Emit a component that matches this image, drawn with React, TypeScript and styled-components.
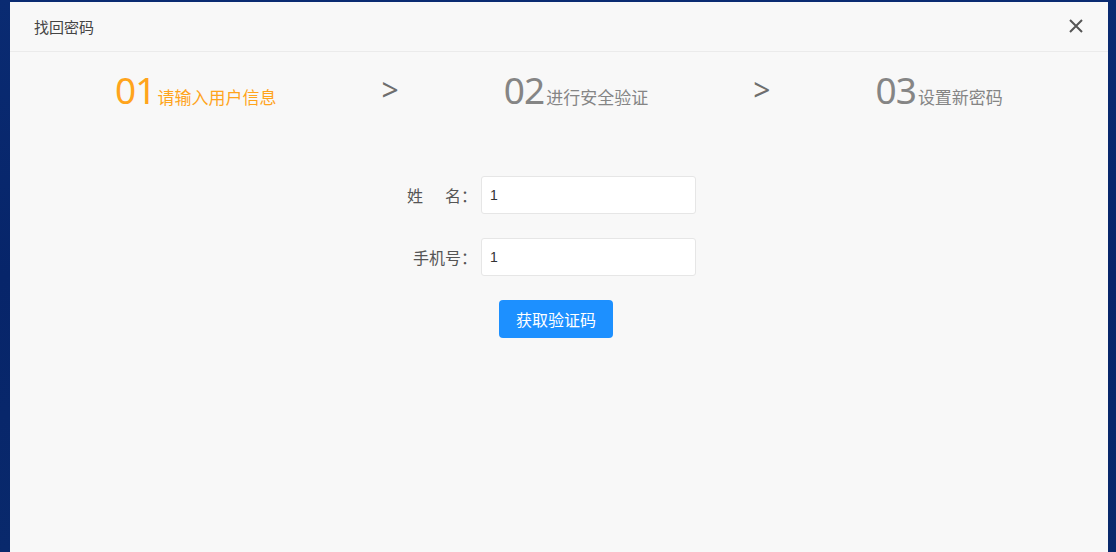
import { Fragment } from "react";
import styled, { createGlobalStyle } from "styled-components";

const GlobalStyle = createGlobalStyle`
  html, body {
    margin: 0;
    padding: 0;
    background: #0a2a6c;
    font-family: "Noto Sans", "Noto Sans CJK SC", sans-serif;
  }
  #root {
    height: 552px;
    overflow: hidden;
  }
`;

const Backdrop = styled.div`
  height: 552px;
  padding: 2px 8px 0 10px;
  box-sizing: border-box;
  background: linear-gradient(180deg, #0a2b72 0%, #07256a 50%, #09296c 100%);
`;

const Dialog = styled.div`
  height: 100%;
  background: #f8f8f8;
  display: flex;
  flex-direction: column;
`;

const Header = styled.div`
  height: 50px;
  display: flex;
  align-items: center;
  justify-content: space-between;
  padding: 0 22px 1px 24px;
  box-sizing: border-box;
  border-bottom: 1px solid #ebebeb;
`;

const Title = styled.span`
  font-size: 15px;
  color: #444;
  font-family: "Noto Sans CJK SC", sans-serif;
`;

const Close = styled.button`
  border: none;
  background: none;
  padding: 0;
  width: 20px;
  height: 20px;
  display: flex;
  align-items: center;
  justify-content: center;
  cursor: pointer;
`;

const Steps = styled.div`
  display: flex;
  justify-content: space-evenly;
  align-items: center;
  height: 76px;
`;

const Step = styled.div<{ $active?: boolean }>`
  display: flex;
  align-items: baseline;
  color: ${(p) => (p.$active ? "#ffa41c" : "#858585")};
`;

const StepNum = styled.span`
  font-family: "Noto Sans", sans-serif;
  font-size: 37px;
  font-weight: 400;
  letter-spacing: -1px;
  line-height: 1;
`;

const StepText = styled.span`
  font-family: "Noto Sans CJK SC", sans-serif;
  font-size: 17px;
  margin-left: 2px;
`;

const Arrow = styled.span`
  font-family: "Noto Sans", sans-serif;
  font-size: 30px;
  font-weight: 400;
  color: #6e6e6e;
  line-height: 1;
`;

const Form = styled.div`
  display: flex;
  flex-direction: column;
  align-items: center;
  margin-top: 48px;
  padding-right: 17px;
  gap: 24px;
`;

const Row = styled.div`
  display: flex;
  align-items: center;
`;

const Label = styled.label`
  width: 72px;
  text-align: right;
  font-family: "Noto Sans CJK SC", sans-serif;
  font-size: 16px;
  color: #555;
  margin-right: 4px;
`;

const Gap = styled.span`
  display: inline-block;
  width: 22px;
`;

const Input = styled.input`
  width: 215px;
  height: 38px;
  box-sizing: border-box;
  border: 1px solid #e6e6e6;
  border-radius: 3px;
  background: #fff;
  padding: 0 8px;
  font-family: "Liberation Sans", sans-serif;
  font-size: 14px;
  color: #333;
  outline: none;
`;

const Button = styled.button`
  margin-left: 11px;
  width: 114px;
  height: 38px;
  border: none;
  border-radius: 4px;
  background: #1d90ff;
  color: #fff;
  font-family: "Noto Sans CJK SC", sans-serif;
  font-size: 16px;
  cursor: pointer;
`;

const steps = [
  { num: "01", text: "请输入用户信息", active: true },
  { num: "02", text: "进行安全验证" },
  { num: "03", text: "设置新密码" },
];

export default function App() {
  return (
    <>
      <GlobalStyle />
      <Backdrop>
        <Dialog>
          <Header>
            <Title>找回密码</Title>
            <Close aria-label="close">
              <svg width="14" height="14" viewBox="0 0 14 14">
                <path d="M1 1L13 13M13 1L1 13" stroke="#555" strokeWidth="2" />
              </svg>
            </Close>
          </Header>
          <Steps>
            {steps.map((s, i) => (
              <Fragment key={s.num}>
                {i > 0 && <Arrow>&gt;</Arrow>}
                <Step $active={s.active}>
                  <StepNum>{s.num}</StepNum>
                  <StepText>{s.text}</StepText>
                </Step>
              </Fragment>
            ))}
          </Steps>
          <Form>
            <Row>
              <Label>
                姓<Gap />名：
              </Label>
              <Input defaultValue="1" />
            </Row>
            <Row>
              <Label>手机号：</Label>
              <Input defaultValue="1" />
            </Row>
            <Button>获取验证码</Button>
          </Form>
        </Dialog>
      </Backdrop>
    </>
  );
}
